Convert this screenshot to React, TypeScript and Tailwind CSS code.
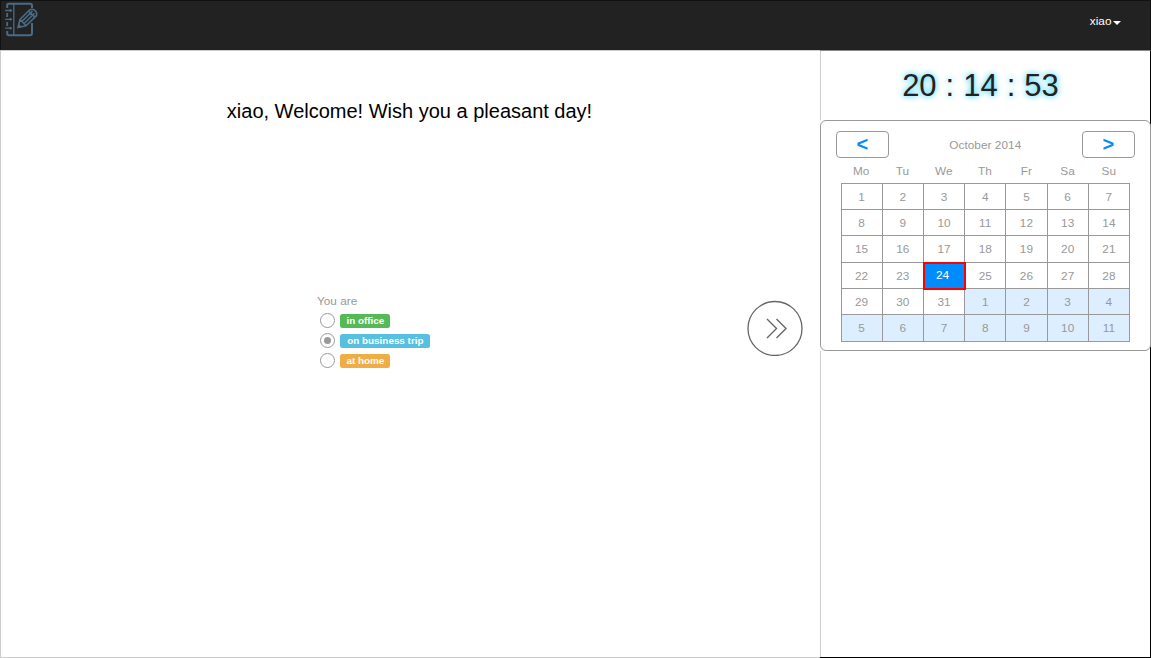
const WEEKDAYS = ["Mo", "Tu", "We", "Th", "Fr", "Sa", "Su"];

const DAYS = Array.from({ length: 42 }, (_, i) => ({
  label: i < 31 ? i + 1 : i - 30,
  outside: i >= 31,
  selected: i === 23,
}));

const STATUSES = [
  { label: "in office", color: "bg-[#55b956]", width: "w-[50px]", checked: false },
  { label: "on business trip", color: "bg-[#57bfe0]", width: "w-[90px]", checked: true },
  { label: "at home", color: "bg-[#f0ad46]", width: "w-[50px]", checked: false },
];

function NotebookIcon() {
  return (
    <svg className="ml-[3px] h-9 w-9" viewBox="0 0 36 36" fill="none" stroke="#4a6b86" strokeWidth="2">
      <path d="M3.2 7V4Q3.2 2.7 5 2.7H26Q28 2.7 28 4.5V7M28 22V32Q28 34.3 26 34.3H5Q3.2 34.3 3.2 32.5V30" />
      <path d="M9.8 3V34" strokeWidth="1.3" />
      <path d="M1.2 9.5H8M1.2 18.3H8M1.2 27.2H8" strokeWidth="1.3" />
      <path d="M3.2 12V16M3.2 21V25" strokeWidth="1.8" />
      <path d="M6.5 8.2V10.8M6.5 17V19.6M6.5 25.9V28.5" strokeWidth="1.6" />
      <path
        d="M14 26.5L16 18.5L25.5 9Q28 7.3 30.5 9.2L32 10.8Q33.6 13 32 15.2L22 24.8L14 26.5ZM16 18.5L22 24.8M18 20.4L28.5 10M20.2 22.5L30.5 12.3M24.5 10L31 16.2"
        strokeWidth="1.6"
      />
      <path d="M13.5 27L14.6 22.5L18 26Z" fill="#4a6b86" stroke="none" />
    </svg>
  );
}

function NavButton({ symbol }: { symbol: string }) {
  return (
    <button className="flex h-[27px] w-[52.5px] items-center justify-center rounded-[4px] border border-[#999] text-[20px] leading-none font-bold text-[#008cff]">
      <span className="-mt-px">{symbol}</span>
    </button>
  );
}

function Calendar() {
  return (
    <section className="h-[231px] w-[331px] rounded-[6px] border border-[#999] bg-white text-[11.8px] tracking-[0.05px] text-[#999]">
      <div className="mt-[9.5px] ml-[15px] flex w-[298.5px] items-center justify-between">
        <NavButton symbol="<" />
        <span className="pt-[3px]">October 2014</span>
        <NavButton symbol=">" />
      </div>
      <div className="ml-[19.5px] grid h-[25px] w-[289px] grid-cols-7 items-center pt-[3px] text-center">
        {WEEKDAYS.map((day) => (
          <span key={day}>{day}</span>
        ))}
      </div>
      <div className="ml-[19.5px] grid h-[159px] w-[289.5px] grid-cols-7 grid-rows-6 border-t border-l border-[#999]">
        {DAYS.map((day, i) => (
          <div
            key={i}
            className={`flex items-center justify-center border-r border-b border-[#999] ${
              day.selected
                ? "relative z-10 -mt-px -mr-px -mb-px -ml-px bg-[#008cff] pt-[2px] pr-[3px] text-white outline-2 -outline-offset-2 outline-[#ff0000]"
                : day.outside
                  ? "bg-[#dceeff] pt-[2.5px]"
                  : "bg-white pt-[2.5px]"
            }`}
          >
            {day.label}
          </div>
        ))}
      </div>
    </section>
  );
}

export default function App() {
  return (
    <div className="flex h-[658px] w-[1151px] flex-col overflow-hidden bg-white font-['Liberation_Sans',Arial,sans-serif]">
      <header className="flex h-[50px] shrink-0 items-start justify-between border border-b-0 border-[#111] bg-[#222]">
        <NotebookIcon />
        <div className="mt-[13px] mr-[29.5px] flex items-center text-[11.8px] leading-[14px] text-white">
          xiao
          <svg className="mt-[3px] ml-px h-1 w-2" viewBox="0 0 8 4" fill="white">
            <path d="M0 0H8L4 4Z" />
          </svg>
        </div>
      </header>
      <div className="flex flex-1">
        <main className="flex w-[820px] flex-col border border-r-0 border-[#ccc]">
          <h1 className="mt-[48px] pr-[2px] text-center text-[20px] leading-6 text-black">
            xiao, Welcome! Wish you a pleasant day!
          </h1>
          <div className="mt-[170px] flex items-start justify-between pr-[17px] pl-[316px]">
            <div>
              <div className="h-[17px] text-[11.8px] leading-[16px] text-[#999]">You are</div>
              {STATUSES.map((status) => (
                <div key={status.label} className="flex h-5 items-center pl-[3px]">
                  <span className="flex h-[15px] w-[15px] items-center justify-center rounded-full border border-[#999]">
                    {status.checked && <span className="h-[7px] w-[7px] rounded-full bg-[#999]" />}
                  </span>
                  <span
                    className={`mt-px ml-[5.4px] flex h-[14px] items-center justify-center rounded-[2.5px] pt-px text-[9.9px] font-bold text-white ${status.width} ${status.color}`}
                  >
                    {status.label}
                  </span>
                </div>
              ))}
            </div>
            <svg className="mt-[7px] h-14 w-14" viewBox="0 0 56 56" fill="none" stroke="#666">
              <circle cx="28" cy="28.5" r="27" strokeWidth="1.3" />
              <path d="M20 19L29.5 28.5L20 38M29.5 19L39 28.5L29.5 38" strokeWidth="1.4" />
            </svg>
          </div>
        </main>
        <aside className="flex w-[331px] flex-col border-t border-r border-b border-t-[#888] border-r-black border-b-black bg-white">
          <div className="flex h-[69px] items-center justify-center border-l border-[#ccc] pt-px pr-[10px] text-[31px] whitespace-pre text-[#222] [text-shadow:0_0_6px_#00c6ff] [word-spacing:0.4px]">
            20 : 14 : 53
          </div>
          <Calendar />
          <div className="w-full flex-1 border-l border-[#ccc]" />
        </aside>
      </div>
    </div>
  );
}
